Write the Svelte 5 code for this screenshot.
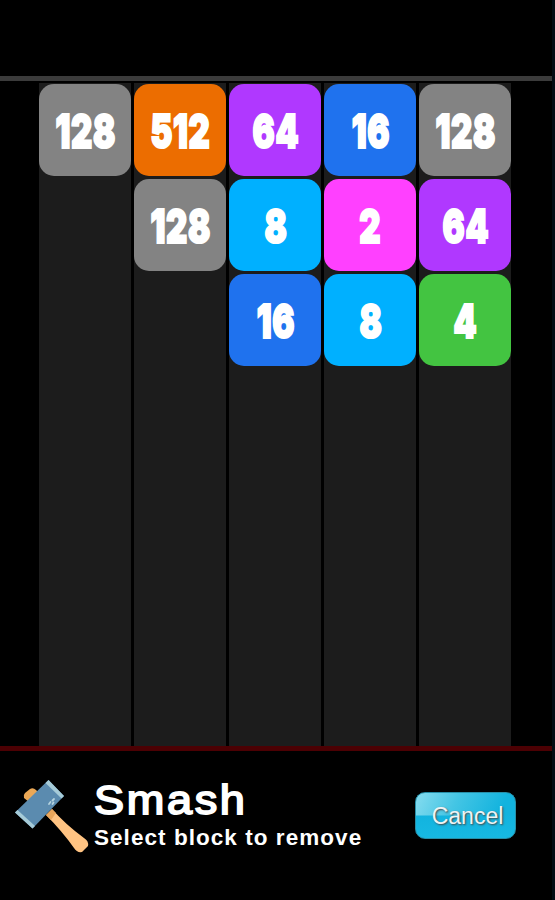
<script lang="ts">
	const colors: Record<number, string> = {
		2: "#ff40ff",
		4: "#43c441",
		8: "#00b0ff",
		16: "#1f72ee",
		64: "#b038ff",
		128: "#838383",
		512: "#ec6d00",
	};

	let columns = $state([
		[128],
		[512, 128],
		[64, 8, 16],
		[16, 2, 8],
		[128, 64, 4],
	]);

	let smashing = $state(true);

	function smash(col: number, row: number) {
		if (!smashing) return;
		columns[col].splice(row, 1);
	}
</script>

<div class="game">
	<header></header>

	<main class="board">
		{#each columns as column, c}
			<div class="column">
				{#each column as value, r}
					<button
						class="block"
						style="background-color: {colors[value]}"
						onclick={() => smash(c, r)}
					>
						<span>{value}</span>
					</button>
				{/each}
			</div>
		{/each}
	</main>

	<footer>
		<svg class="hammer" viewBox="0 0 76 76" width="76" height="76">
			<path d="M9 18 Q8 15 10 13 L15 9 Q18 7 21 10 L24 13 L14 22 Z" fill="#eba856" />
			<path
				d="M31 35 L37 29 Q50 44 69 58 Q74 61 73 66 L67 72 Q62 73 59 68 Q47 51 31 35 Z"
				fill="#ffc382"
			/>
			<path d="M31 35 L37 29 L41 33 L36 40 Z" fill="#eaa65b" />
			<path d="M33.5 0 L49 16 L17.5 48.5 L0 32.5 Z" fill="#5b8baf" />
			<path d="M33.5 0 L49 16 L46.5 18.5 L30.5 3 Z" fill="#a6cbd8" />
			<path d="M2.5 30 L20 46 L17.5 48.5 L0 32.5 Z" fill="#a6cbd8" />
			<path
				d="M34 24 L35.5 22 M37.5 20.5 L39 19 M37.5 24 L38.5 22.5"
				stroke="#b4d3df"
				stroke-width="1.8"
				stroke-linecap="round"
				fill="none"
			/>
		</svg>
		<div class="text">
			<h1>Smash</h1>
			<p>Select block to remove</p>
		</div>
		<button class="cancel" onclick={() => (smashing = false)}>Cancel</button>
	</footer>
</div>

<style>
	:global(body) {
		margin: 0;
		background: #000;
	}

	.game {
		box-sizing: border-box;
		width: 555px;
		height: 900px;
		display: flex;
		flex-direction: column;
		background: #000;
		border-right: 3px solid #030c14;
		font-family: "Liberation Sans", Arial, sans-serif;
		overflow: hidden;
	}

	header {
		box-sizing: border-box;
		height: 81px;
		border-bottom: 5px solid #3b3b3b;
	}

	.board {
		display: flex;
		gap: 3px;
		height: 663px;
		padding: 2px 0 0 39px;
	}

	.column {
		box-sizing: border-box;
		width: 92px;
		padding-top: 1px;
		display: flex;
		flex-direction: column;
		align-items: center;
		gap: 3px;
		background: #1c1c1c;
	}

	.block {
		display: flex;
		align-items: center;
		justify-content: center;
		width: 92px;
		height: 92px;
		flex: none;
		padding: 0;
		border: none;
		border-radius: 15px;
		color: #fff;
		cursor: pointer;
	}

	.block span {
		font-family: Inter, "Liberation Sans", sans-serif;
		font-size: 47px;
		font-weight: 900;
		line-height: 1;
		letter-spacing: 1px;
		transform: translate(0.5px, -0.5px) scaleX(0.7);
		-webkit-text-stroke: 2.2px #fff;
	}

	footer {
		display: flex;
		flex: 1;
		align-items: flex-start;
		border-top: 5px solid #4c0003;
		padding-left: 15px;
	}

	.hammer {
		margin-top: 29px;
	}

	.text {
		width: 321px;
		margin: 26px 0 0 3px;
		color: #fff;
		white-space: nowrap;
	}

	h1 {
		margin: 0;
		font-size: 41px;
		font-weight: 400;
		line-height: 46px;
		letter-spacing: 2.4px;
		transform: scaleX(1.1);
		transform-origin: left;
		-webkit-text-stroke: 1.8px #fff;
	}

	p {
		margin: 0;
		font-size: 22.5px;
		font-weight: 700;
		line-height: 30px;
		letter-spacing: 1.05px;
	}

	.cancel {
		flex: none;
		width: 101px;
		height: 47px;
		margin-top: 41px;
		padding: 2px 0 0 4px;
		border: 1px solid #278fa8;
		border-radius: 10px;
		background:
			linear-gradient(115deg, #85dcef 0%, #44c5e4 40%, #12b3de 85%) 0 0 / 100% 50% no-repeat,
			linear-gradient(#0daedb, #17b9e3);
		color: #eef3f4;
		font-family: inherit;
		font-size: 23px;
		text-shadow: 1px 1px 2px #444;
		cursor: pointer;
	}
</style>
